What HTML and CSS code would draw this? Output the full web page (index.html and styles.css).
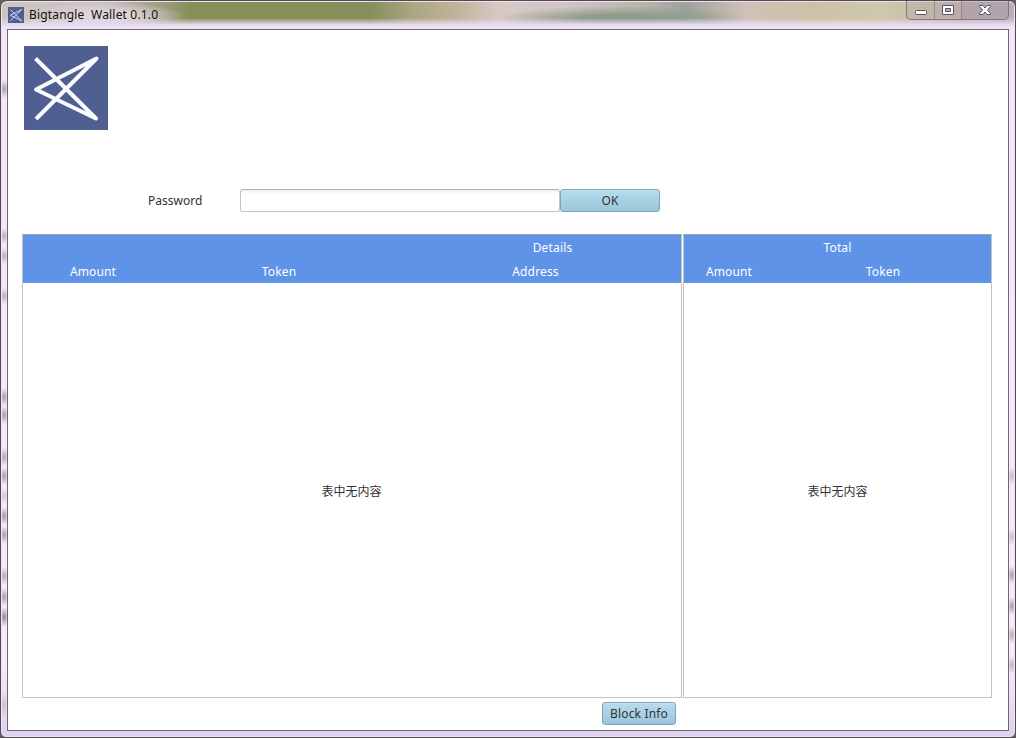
FILE: index.html
```
<!DOCTYPE html>
<html lang="en">
<head>
<meta charset="utf-8">
<title>Bigtangle Wallet 0.1.0</title>
<link rel="stylesheet" href="styles.css">
</head>
<body>
<div class="desktop">
<div class="window">
  <header class="titlebar">
    <svg class="app-icon" viewBox="0 0 84 84"><rect width="84" height="84" fill="#4f5f91"/><path d="M12 13 72 73 12 43 72 13 12 73" fill="none" stroke="#cfdcf5" stroke-width="5"/></svg>
    <span class="title">Bigtangle&nbsp; Wallet 0.1.0</span>
    <div class="controls">
      <span class="control"><svg width="27" height="19"><rect x="8.500" y="10.500" width="11" height="4" rx="1" fill="#fff" stroke="#555563"/></svg></span>
      <span class="control"><svg width="26" height="19"><path d="M7.500 5.500h11v9h-11z" fill="#fff" stroke="#555563"/><path d="M10.500 8.500h5v3h-5z" fill="#b5afa9" stroke="#555563"/></svg></span>
      <span class="control close"><svg width="46" height="19"><path d="M17.500 5.500h3.500l2 2.500 2-2.500h3.500v1l-3 3.500 3 3.500v1h-3.500l-2-2.500-2 2.500h-3.500v-1l3-3.500-3-3.500z" fill="#fff" stroke="#555563"/></svg></span>
    </div>
  </header>
  <main class="client">
    <svg class="logo" viewBox="0 0 84 84"><rect width="84" height="84" fill="#4f5f91"/><path d="M11.500 12.500 72 72.500 12 43.500 72.500 12.500 12 73" fill="none" stroke="#fafcff" stroke-width="4" stroke-linejoin="round"/></svg>
    <form class="login">
      <label class="label" for="pw">Password</label>
      <input class="field" id="pw" type="password">
      <button class="button ok" type="button">OK</button>
    </form>
    <div class="tables">
      <section class="table details">
        <div class="head">
          <div class="group">Details</div>
          <div class="columns"><span>Amount</span><span>Token</span><span>Address</span></div>
        </div>
        <div class="empty">表中无内容</div>
      </section>
      <section class="table total">
        <div class="head">
          <div class="group">Total</div>
          <div class="columns"><span>Amount</span><span>Token</span></div>
        </div>
        <div class="empty">表中无内容</div>
      </section>
    </div>
    <div class="footer"><button class="button info" type="button">Block Info</button></div>
  </main>
</div>
</div>
</body>
</html>
```
FILE: styles.css
```
* { box-sizing: border-box; }
body { margin: 0; font: 12px/16px "Noto Sans", "Noto Sans CJK SC", sans-serif; color: #333; }
.desktop { width: 1016px; height: 738px; background: #66605c; overflow: hidden; }
.window {
  height: 738px;
  padding: 0 6px 6px;
  border: 1px solid #514951;
  border-radius: 7px 7px 6px 6px;
  box-shadow: inset 0 0 0 1px #eee5ed;
  background:
    radial-gradient(ellipse 6px 9px at 3px 88px, #a7a3b3, transparent),
    radial-gradient(ellipse 5px 8px at 3px 235px, #b9acb9, transparent),
    radial-gradient(ellipse 5px 8px at 3px 255px, #b9acb9, transparent),
    radial-gradient(ellipse 5px 8px at 3px 295px, #b9acb9, transparent),
    radial-gradient(ellipse 5px 9px at 3px 396px, #aa9caa, transparent),
    radial-gradient(ellipse 5px 9px at 3px 414px, #aa9caa, transparent),
    radial-gradient(ellipse 5px 9px at 3px 456px, #b3a5b3, transparent),
    radial-gradient(ellipse 5px 9px at 3px 475px, #aa9caa, transparent),
    radial-gradient(ellipse 5px 8px at 3px 495px, #d6c9d8, transparent),
    radial-gradient(ellipse 5px 9px at 3px 515px, #a596a5, transparent),
    radial-gradient(ellipse 5px 9px at 3px 534px, #aa9caa, transparent),
    radial-gradient(ellipse 5px 9px at 3px 575px, #b8aab8, transparent),
    radial-gradient(ellipse 5px 9px at 3px 596px, #aa9caa, transparent),
    radial-gradient(ellipse 5px 10px at 3px 616px, #958795, transparent),
    radial-gradient(ellipse 5px 13px at 3px 704px, #cdbfd0, transparent),
    radial-gradient(ellipse 5px 9px at 1011px 475px, #c9bccb, transparent),
    radial-gradient(ellipse 5px 9px at 1011px 536px, #c9bccb, transparent),
    radial-gradient(ellipse 5px 9px at 1011px 574px, #aa9caa, transparent),
    radial-gradient(ellipse 5px 9px at 1011px 605px, #aa9caa, transparent),
    radial-gradient(ellipse 5px 9px at 1011px 634px, #b8aab8, transparent),
    radial-gradient(ellipse 5px 9px at 1011px 664px, #c2b4c4, transparent),
    linear-gradient(#e8dcef00 17px, #e8dcef 24px, #f1e6fa 29px) 0 0 / 100% 29px no-repeat,
    radial-gradient(ellipse 80px 14px at 105px 15px, #ded4dc 30%, #ded4dc00) 0 0 / 100% 29px no-repeat,
    radial-gradient(ellipse 125px 13px at 620px 18px, #8f9a8c 30%, #8f9a8c00) 0 0 / 100% 29px no-repeat,
    linear-gradient(90deg, #cbc5c0 0, #cdc2c2 100px, #aaa48e 145px, #858f58 190px, #858f5b 370px, #aaa580 410px, #c0b39b 455px, #d8c9c5 500px, #cfc5c1 570px, #b8b5ac 640px, #9ca49a 685px, #d1c0b7 745px, #cbc2a6 810px, #d0c8ab 880px, #bcaeac 960px, #bbafba 1010px) 0 0 / 100% 29px no-repeat,
    linear-gradient(#f1e6fa, #f6ebfa 90%, #dcd1ee);
}
.titlebar { height: 28px; display: flex; align-items: flex-start; }
.app-icon { width: 16px; height: 16px; margin: 6px 0 0 1px; }
.title { margin: 5px 0 0 5px; line-height: 17px; color: #111; letter-spacing: .17px; white-space: nowrap; }
.controls { display: flex; height: 19px; width: 103px; margin: 0 0 0 auto; border: 1px solid #817981; border-top: 0; border-radius: 0 0 5px 5px; background: #b9aaa955; overflow: hidden; }
.control { width: 28px; height: 19px; border-right: 1px solid #928b88; }
.control svg { display: block; margin-top: -1px; }
.control + .control { width: 27px; }
.control.close, .control + .control.close { width: 46px; border: 0; background: #a394a955; }
.client { height: 702px; padding: 16px 15px 0 14px; border: 1px solid #716773; background: #fff; display: flex; flex-direction: column; }
.logo { width: 84px; height: 84px; margin-left: 2px; flex: none; }
.login { display: flex; margin: 59px 0 0 126px; height: 23px; }
.label { width: 92px; line-height: 23px; }
.field { width: 320px; height: 23px; border: 1px solid #c4c4c4; border-top-color: #b4b4b4; border-radius: 3px; background: linear-gradient(#f0f0f0, #fff 4px); outline: 0; }
.button { height: 23px; padding: 0; border: 1px solid #78a5b9; border-radius: 3px; background: linear-gradient(#b7dced, #9bc6da); box-shadow: inset 0 1px #c4e3f0; font: inherit; line-height: 21px; color: #333; }
.ok { width: 100px; }
.tables { display: grid; grid-template-columns: 660px 309px; gap: 1px; margin-top: 22px; height: 464px; }
.table { border: 1px solid #c4c4c4; border-top-color: #88a8d8; display: flex; flex-direction: column; }
.head { height: 48px; padding-top: 1px; background: #5f93e7; color: #fff; text-align: center; box-shadow: inset 0 1px #698fc9; line-height: 24px; letter-spacing: .15px; }
.head > div { height: 24px; }
.details .group { padding-left: 401px; }
.columns { display: grid; }
.details .columns { grid-template-columns: 140px 232px 281px; }
.total .columns { grid-template-columns: 90px 218px; }
.empty { flex: 1; display: grid; place-items: center; padding: 3px 0 0; }
.details .empty { padding-right: 1px; }
.footer { padding: 4px 0 0 580px; }
.info { width: 74px; letter-spacing: .15px; }
```
